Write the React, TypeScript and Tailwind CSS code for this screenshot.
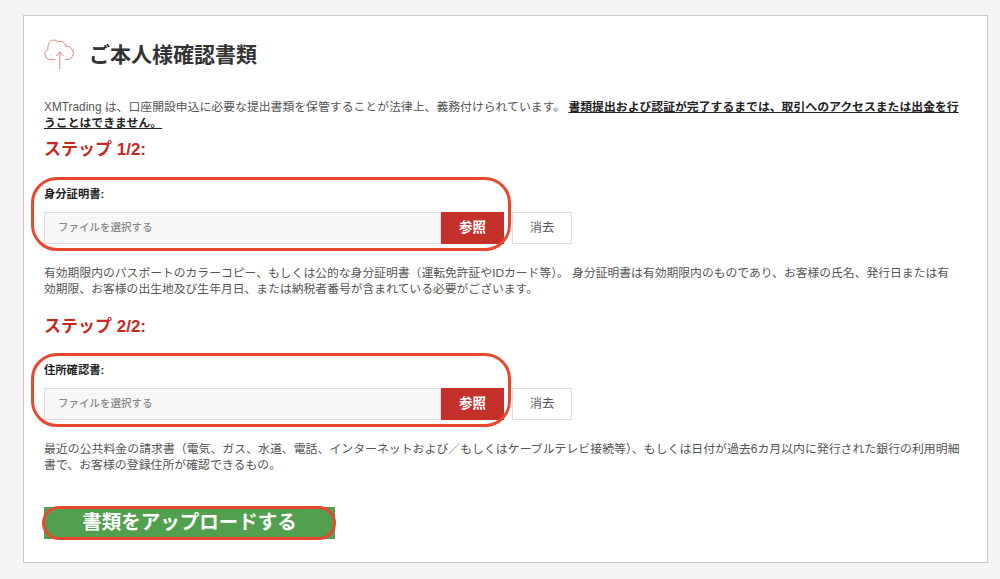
const font = { fontFamily: '"Liberation Sans", "Noto Sans CJK JP", sans-serif' };

function CloudIcon() {
  return (
    <svg width="32" height="32" viewBox="0 0 32 32" fill="none" stroke="#e0746c" strokeWidth="0.9" className="shrink-0">
      <path d="M10.5 20.5H6.5C3.2 20.5 1 18 1 15.2c0-2.4 1.2-4 3-4.9C3.6 6.4 4.8 2 8.5 1.2c2.6-.5 4.200.6 5.500 2 1.200-.9 3-1.100 4.600-.4 2 .8 3 2.600 3 4.400 3.200-.4 6.400 1.800 7.400 4.800.9 2.700-.1 5.500-2.100 7.200-1.100.9-2.500 1.300-4.200 1.300H21" />
      <path d="M15.800 30V13M12.300 17l3.500-4 3.500 4" />
    </svg>
  );
}

function UploadField({ label }: { label: string }) {
  return (
    <div className="relative">
      <div className="absolute left-[-13px] top-[-8px] w-[480px] h-[74px] rounded-[26px] border-[3px] border-[#e8492e]" />
      <p className="pt-[1px] text-[11.3px] leading-[16px] font-bold text-[#222]">{label}</p>
      <div className="flex mt-[10px]">
        <div className="w-[397px] h-[32px] bg-[#f7f7f7] border border-[#ddd] pl-[13px] flex items-center text-[10.5px] font-medium text-[#888]">
          ファイルを選択する
        </div>
        <div className="w-[63px] h-[32px] bg-[#c4312a] flex items-center justify-center text-[13.5px] font-bold text-white">
          参照
        </div>
        <div className="ml-[8px] w-[60px] h-[32px] bg-white border border-[#ddd] flex items-center justify-center text-[12px] text-[#555]">
          消去
        </div>
      </div>
    </div>
  );
}

export default function App() {
  return (
    <div className="bg-[#f5f5f5] h-[579px] pt-[15px] pl-[23px] overflow-hidden" style={font}>
      <div className="w-[965px] h-[548px] bg-white border border-[#ccc] pl-[20px] pr-[26px] pt-[23px]">
        <div className="flex items-center gap-[13px] h-[32px]">
          <CloudIcon />
          <h1 className="text-[21px] leading-[28px] font-bold text-[#333]">ご本人様確認書類</h1>
        </div>

        <p className="mt-[28px] text-[11.85px] leading-[16px] text-[#555]">
          XMTrading は、口座開設申込に必要な提出書類を保管することが法律上、義務付けられています。{" "}
          <span className="font-bold text-[#222] underline">
            書類提出および認証が完了するまでは、取引へのアクセスまたは出金を行うことはできません。
          </span>
        </p>

        <h2 className="mt-[7px] text-[17px] leading-[24px] font-bold text-[#c8281e]">ステップ 1/2:</h2>

        <div className="mt-[23px]">
          <UploadField label="身分証明書:" />
        </div>
        <p className="mt-[21px] pr-[6px] text-[11.8px] leading-[16px] text-[#555]">
          有効期限内のパスポートのカラーコピー、もしくは公的な身分証明書（運転免許証やIDカード等）。 身分証明書は有効期限内のものであり、お客様の氏名、発行日または有効期限、お客様の出生地及び生年月日、または納税者番号が含まれている必要がございます。
        </p>

        <h2 className="mt-[18px] text-[17px] leading-[24px] font-bold text-[#c8281e]">ステップ 2/2:</h2>

        <div className="mt-[22px]">
          <UploadField label="住所確認書:" />
        </div>
        <p className="mt-[21px] text-[11.9px] leading-[16px] text-[#555]">
          最近の公共料金の請求書（電気、ガス、水道、電話、インターネットおよび／もしくはケーブルテレビ接続等）、もしくは日付が過去6カ月以内に発行された銀行の利用明細書で、お客様の登録住所が確認できるもの。
        </p>

        <div className="relative mt-[34px] w-[291px] h-[32px] bg-[#52a04f] flex items-center justify-center text-[19.5px] font-bold text-white">
          書類をアップロードする
          <div className="absolute left-[-2px] top-[-1px] w-[294px] h-[34px] rounded-[17px] border-[3px] border-[#e8492e]" />
        </div>
      </div>
    </div>
  );
}
